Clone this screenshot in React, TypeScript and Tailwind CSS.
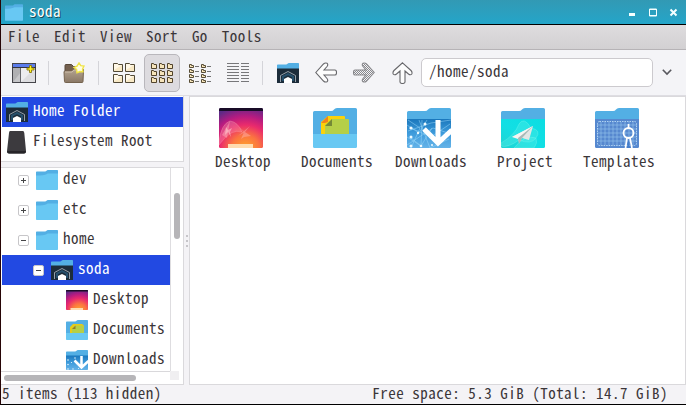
import type { ReactNode } from 'react';

type FolderKind = 'plain' | 'home' | 'desktop' | 'documents' | 'downloads' | 'project' | 'templates';

function Tab() {
  return <path d="M0 12V4.5Q0 3 1.5 3H18Q20 3 21 1.5Q22 0 24 0H42.500Q44 0 44 1.500V12Z" fill="#53afe4" />;
}

function FolderIcon({ kind, w = 22, h = 20 }: { kind: FolderKind; w?: number; h?: number }) {
  const id = `${kind}${w}`;
  const large = w > 30;
  return (
    <svg width={w} height={h} viewBox="0 0 44 40" className="block shrink-0">
      <defs>
        <linearGradient id={`d${id}`} x1="0" y1="0" x2="0" y2="1">
          <stop offset="0" stopColor="#1a77bc" />
          <stop offset=".5" stopColor="#3f9cdc" />
          <stop offset="1" stopColor="#65b3e8" />
        </linearGradient>
        <radialGradient id={`s${id}`} cx=".6" cy="1" r="1.05">
          <stop offset="0" stopColor="#ffa72c" />
          <stop offset=".3" stopColor="#fb7440" />
          <stop offset=".55" stopColor="#ea2b6c" />
          <stop offset=".76" stopColor="#b51b81" />
          <stop offset="1" stopColor="#5b2a86" />
        </radialGradient>
        <linearGradient id={`p${id}`} x1="0" y1="1" x2="1" y2="0">
          <stop offset="0" stopColor="#22d3d2" />
          <stop offset=".45" stopColor="#12dfe4" />
          <stop offset="1" stopColor="#0bdde2" />
        </linearGradient>
      </defs>
      {kind === 'desktop' ? (
        <>
          <rect width="44" height="40" rx="1.500" fill={`url(#s${id})`} />
          <path d="M0 3V1.500Q0 0 1.500 0H42.500Q44 0 44 1.500V3Z" fill="#190c27" />
          <path d="M9 40V36H34V40Z" fill="#ffdcb0" />
          {large && (
            <>
              <path d="M0 34Q2 16 11 13Q19 14 23 24Q12 20 0 37Z" fill="#ffb3c0" fillOpacity=".28" stroke="#ffb0bb" strokeOpacity=".5" strokeWidth=".6" />
              <path d="M3 27L11 13L8 30ZM20 19L26 24L32 28L25 29L22 31L25 24ZM31 18L26 24L19 28Z" fill="#ffc0c4" fillOpacity=".4" />
              <path d="M7 19L9 22L13 20L11 24L12 29L9 24L6 27Z" fill="#ffd2d2" fillOpacity=".55" />
            </>
          )}
        </>
      ) : (
        <Tab />
      )}
      {kind === 'plain' && <path d="M0 11Q16 11 22 8L23 7H44V38.500Q44 40 42.500 40H1.500Q0 40 0 38.500Z" fill="#68c8f3" />}
      {kind === 'home' && (
        <>
          <path d="M0 11H44V40H0Z" fill="#1c2c3a" />
          <path d="M7 38V25L22 17L37 25V38" fill="none" stroke="#b4bec6" strokeWidth="1.600" />
          <path d="M12 36V27L22 22L32 27V36" fill="none" stroke="#26506c" strokeWidth="4" />
          <path d="M14 40V32L22 28L30 32V40Z" fill="#fff" />
        </>
      )}
      {kind === 'documents' && (
        <>
          <path d="M0 9H44V27H0Z" fill="#53afe4" />
          {large ? (
            <>
              <path d="M8 31V14L15 8H31Q32 8 32 9V31Z" fill="#fbd20a" />
              <path d="M8 15L15 8V14L12 15Z" fill="#f1831d" />
              <path d="M12 31V17L19 11H35Q36 11 36 12V31Z" fill="#b5cf48" />
              <path d="M12 18L19 11V18Z" fill="#758936" />
              <path d="M0 26H44V38.500Q44 40 42.500 40H1.500Q0 40 0 38.500Z" fill="#68c8f3" />
            </>
          ) : (
            <>
              <path d="M8 26V14L14 8H32Q36 9 36 13V26Z" fill="#e8cb18" />
              <path d="M12 26V17L18 11H33L36 14V26Z" fill="#b5cf48" />
              <path d="M12 18L19 11V18Z" fill="#937d28" />
              <path d="M0 26H44V38.500Q44 40 42.500 40H1.500Q0 40 0 38.500Z" fill="#68c8f3" />
            </>
          )}
        </>
      )}
      {kind === 'downloads' && (
        <>
          <path d="M0 11H44V38.500Q44 40 42.500 40H1.500Q0 40 0 38.500Z" fill={`url(#d${id})`} />
          {large && (
            <path d="M0 17L12 25L20 12M4 40L13 20L1 12M0 29L14 38L25 20M4 20L24 29L43 16M0 37L26 20L44 26M12 12L23 40L42 31M1 23L24 15L44 12M15 12L14 38L3 29" stroke="#9ddbfb" strokeWidth=".55" opacity=".9" fill="none" />
          )}
          <path d="M31 12V33M17 21L31 35L45 22" stroke="#fff" strokeWidth="5" fill="none" />
          <g fill="#f0fbff">
            <circle cx="4" cy="20" r="1.600" /><circle cx="11" cy="25" r="1.200" /><circle cx="4" cy="29" r="1.500" />
            <circle cx="14" cy="38" r="1.300" /><circle cx="23" cy="29" r="1.200" /><circle cx="18" cy="16" r="1.500" />
            <circle cx="4" cy="38" r="1.500" /><circle cx="25" cy="37" r="1" />
          </g>
        </>
      )}
      {kind === 'project' && (
        <>
          <path d="M0 11H44V38.500Q44 40 42.500 40H1.500Q0 40 0 38.500Z" fill={`url(#p${id})`} />
          <g fill="#67f1e9" fillOpacity=".3" stroke="#9bfff3" strokeOpacity=".5" strokeWidth=".5">
            <path d="M0 35Q14 27 18 16Q23 8 30 20Q41 22 35 30Q30 37 18 32Q7 40 0 38Z" />
            <path d="M13 40Q24 26 35 30Q37 35 33 40Z" />
          </g>
          <path d="M32 18L28 32L21 30L18 35L17 29L11 29Z" fill="#e2e6e5" />
          <path d="M32 18L11 29L17 31Z" fill="#f6f5f3" />
          <path d="M32 18L17 30L18 36L21 30Z" fill="#a9b9b8" />
        </>
      )}
      {kind === 'templates' && (
        <>
          <path d="M0 11H44V38.500Q44 40 42.500 40H1.500Q0 40 0 38.500Z" fill="#5688cf" />
          <path d="M6 14V37M10 14V37M14 14V37M18 14V37M22 14V37M26 14V37M30 14V37M34 14V37M38 14V37M2 17H42M2 21H42M2 25H42M2 29H42M2 33H42" stroke="#98c8ef" strokeWidth=".6" />
          <rect x="2.500" y="13.500" width="39" height="24" rx="2" fill="none" stroke="#c6e4fa" strokeWidth=".8" strokeDasharray="1.500 1" />
          <path d="M33.500 30L32 40H35Z" fill="#447dca" />
          <circle cx="33.500" cy="25" r="5" fill="none" stroke="#fff" strokeWidth="1.900" />
          <path d="M33.500 16V20M32 30L30.500 40M35 30L37 40" stroke="#fff" strokeWidth="1.700" />
        </>
      )}
    </svg>
  );
}

function ToolButton({ active = false, children }: { active?: boolean; children: ReactNode }) {
  return (
    <button
      className={`flex h-[38px] w-9 shrink-0 items-center justify-center rounded-[5px] border ${
        active ? 'border-[#b9b7bc] bg-[#dddbdf]' : 'border-transparent'
      }`}
    >
      {children}
    </button>
  );
}

function Separator() {
  return <div className="ml-1 mr-[5px] h-6 w-px shrink-0 bg-[#d4d4d9]" />;
}

function NewWindowIcon() {
  return (
    <svg width="24" height="20" viewBox="0 0 24 20">
      <rect x=".5" y=".5" width="23" height="19" fill="#dddde0" stroke="#45454b" />
      <path d="M1 5H9V19H1Z" fill="#b0b0b3" />
      <path d="M9 5H23L9 19Z" fill="#ececef" />
      <path d="M1 19L9 9V19Z" fill="#c6c6c9" />
      <rect x="1" y="1" width="22" height="3" fill="#5b7cec" />
      <path d="M0 4.500H24" stroke="#34353d" />
      <path d="M8.500 5V19" stroke="#66666b" />
      <path d="M17.500 2.500H19.500V5H22V7H19.500V9.500H17.500V7H15V5H17.500Z" fill="#fff31d" stroke="#8b790e" strokeWidth=".9" />
    </svg>
  );
}

function NewFolderIcon() {
  return (
    <svg width="22" height="22" viewBox="0 0 22 22">
      <defs>
        <linearGradient id="brownFolder" x1="0" y1="0" x2="0" y2="1">
          <stop offset="0" stopColor="#b5a591" /><stop offset="1" stopColor="#8a7866" />
        </linearGradient>
      </defs>
      <path d="M2 10V3.500Q2 2.500 3 2.500H8.500L10.500 4.500H17V10Z" fill="#74604f" stroke="#574739" />
      <path d="M1 10Q1 9 2 9H8.500L10.500 7H19.500Q20.500 7 20.500 8L20 19.500Q20 20.500 19 20.500H2.500Q1.500 20.500 1.500 19.500Z" fill="url(#brownFolder)" stroke="#75634f" />
      <path d="M2 10H9L11 8H19.500" fill="none" stroke="#cdbdaa" />
      <path d="M16 1L17.800 3.600L21 4L19.500 7L20 9.800L17 9.500L14 10.700L13.600 7.500L11 5.500L14 4.200Z" fill="#fffde4" stroke="#f0e446" strokeWidth="1.400" />
    </svg>
  );
}

function TinyFolders({ size }: { size: 'large' | 'small' }) {
  if (size === 'large')
    return (
      <svg width="22" height="20" viewBox="0 0 22 20" fill="#f8e9c6" stroke="#514937">
        <path d="M.5 .5H4.500L5.500 1.500H9.500V8.500H.5ZM12.500 .5H16.500L17.500 1.500H21.500V8.500H12.500ZM.5 11.500H4.500L5.500 12.500H9.500V19.500H.5ZM12.500 11.500H16.500L17.500 12.500H21.500V19.500H12.500Z" />
        <path d="M1 8V1H4L5 2H9L1 7ZM13 8V1H16L17 2H21L13 7ZM1 19V12H4L5 13H9L1 18ZM13 19V12H16L17 13H21L13 18Z" fill="#fff8e8" stroke="none" />
      </svg>
    );
  return (
    <svg width="22" height="20" viewBox="0 0 22 20" fill="#f6e4ba" stroke="#51432b">
      {[0, 7, 14].map((y) => [0, 8, 16].map((x) => <path key={`${x}-${y}`} transform={`translate(${x} ${y})`} d="M.5 .5H2.500L3 1.500H5.500V5.500H.5Z" />))}
    </svg>
  );
}

function CompactIcon() {
  return (
    <svg width="22" height="20" viewBox="0 0 22 20" fill="#f6e4ba" stroke="#574c35">
      {[1, 6, 11, 16].map((y) => [0, 12].map((x) => (
        <g key={`${x}-${y}`} transform={`translate(${x} ${y})`}>
          <path d="M.5 .5H2.500V1.500H4.500V3.500H.5Z" />
          <path d="M6 2.500H10" stroke="#737373" />
        </g>
      )))}
    </svg>
  );
}

function DetailIcon() {
  return (
    <svg width="22" height="20" viewBox="0 0 22 20">
      <path d="M0 .5H12M14 .5H22M0 3.500H12M14 3.500H22M0 6.500H12M14 6.500H22M0 9.500H12M14 9.500H22M0 12.500H12M14 12.500H22M0 15.500H12M14 15.500H22M0 18.500H12M14 18.500H22" stroke="#77777a" />
    </svg>
  );
}

function Arrow({ direction }: { direction: 'left' | 'right' | 'up' }) {
  const turn = direction === 'left' ? '' : direction === 'right' ? 'rotate(180 11 10.500)' : 'rotate(90 11 11)';
  return (
    <svg width="22" height="22" viewBox="0 0 22 22">
      <defs>
        <pattern id="arrowDither" width="2" height="2" patternUnits="userSpaceOnUse">
          <rect width="2" height="2" fill="#f4f4f7" /><path d="M0 0H1V1H0ZM1 1H2V2H1Z" fill="#88888c" />
        </pattern>
      </defs>
      <path
        transform={turn}
        d="M.8 10.500L8.500 2Q10 .5 12 1.200Q13.500 2.500 12 4.500L9 8H20Q21.500 8 21.500 10.500Q21.500 13 20 13H9L12 16.500Q13.500 18.500 12 19.800Q10 20.500 8.500 19Z"
        fill={direction === 'right' ? 'url(#arrowDither)' : '#fdfdfd'}
        stroke={direction === 'right' ? '#87878b' : '#66666a'}
        strokeWidth="1.100"
      />
    </svg>
  );
}

function Expander({ open }: { open: boolean }) {
  return (
    <span className="flex size-[11px] shrink-0 items-center justify-center rounded-[2px] border border-[#c7c6c9] bg-white">
      <svg width="5" height="5" viewBox="0 0 5 5">
        <path d={open ? 'M0 2.500H5' : 'M0 2.500H5M2.500 0V5'} stroke="#454547" />
      </svg>
    </span>
  );
}

const tree: { name: string; kind: FolderKind; pad: string; open?: boolean; selected?: boolean }[] = [
  { name: 'dev', kind: 'plain', pad: 'pl-4', open: false },
  { name: 'etc', kind: 'plain', pad: 'pl-4', open: false },
  { name: 'home', kind: 'plain', pad: 'pl-4', open: true },
  { name: 'soda', kind: 'home', pad: 'pl-[31px]', open: true, selected: true },
  { name: 'Desktop', kind: 'desktop', pad: 'pl-16' },
  { name: 'Documents', kind: 'documents', pad: 'pl-16' },
  { name: 'Downloads', kind: 'downloads', pad: 'pl-16' },
];

const files: { name: string; kind: FolderKind }[] = [
  { name: 'Desktop', kind: 'desktop' },
  { name: 'Documents', kind: 'documents' },
  { name: 'Downloads', kind: 'downloads' },
  { name: 'Project', kind: 'project' },
  { name: 'Templates', kind: 'templates' },
];

export default function App() {
  return (
    <div className="flex h-[405px] w-[686px] flex-col overflow-hidden border-b border-l border-b-black border-l-[#260506] bg-[#f4f3f6] font-['Noto_Sans_Mono_CJK_SC','DejaVu_Sans_Mono',monospace] text-[15px] leading-[18px] tracking-[0.49px] text-[#3b3639]">
      <header className="flex h-[25px] shrink-0 items-center border-b border-black bg-linear-to-b from-[#3299b4] to-[#23a5c9] pl-1 pr-2 text-white">
        <FolderIcon kind="plain" w={18} h={17} />
        <span className="ml-1.5 pb-[3px] [text-shadow:1px_1px_0_#174955]">soda</span>
        <svg className="ml-auto" width="49" height="9" viewBox="0 0 49 9" fill="none" stroke="#f5ffff">
          <path d="M0 6.500H6" strokeWidth="3" />
          <path d="M20.500 8V1H27.500V8ZM20 1.500H28M20 7.500H28" />
          <path d="M41.500 1.500L47.500 7.500M47.500 1.500L41.500 7.500" strokeWidth="2" />
        </svg>
      </header>

      <nav className="flex h-[25px] shrink-0 items-center gap-[14px] border-b border-[#b6b3b6] bg-linear-to-b from-[#dedcde] to-[#d2d0d2] pb-[3px] pl-[7px]">
        {['File', 'Edit', 'View', 'Sort', 'Go', 'Tools'].map((item) => <span key={item}>{item}</span>)}
      </nav>

      <div className="flex h-[46px] shrink-0 items-center gap-0.5 border-b border-[#dedde2] bg-[#f4f4f7] pl-[5px]">
        <ToolButton><NewWindowIcon /></ToolButton>
        <Separator />
        <ToolButton><NewFolderIcon /></ToolButton>
        <Separator />
        <ToolButton><TinyFolders size="large" /></ToolButton>
        <ToolButton active><TinyFolders size="small" /></ToolButton>
        <ToolButton><CompactIcon /></ToolButton>
        <ToolButton><DetailIcon /></ToolButton>
        <Separator />
        <ToolButton><FolderIcon kind="home" /></ToolButton>
        <ToolButton><Arrow direction="left" /></ToolButton>
        <ToolButton><Arrow direction="right" /></ToolButton>
        <ToolButton><Arrow direction="up" /></ToolButton>
        <div className="-ml-px flex h-[29px] w-[232px] items-center rounded-[5px] border border-[#cccace] bg-white pb-[3px] pl-[7px]">
          /home/soda
        </div>
        <svg className="ml-[7px]" width="10" height="7" viewBox="0 0 10 7" fill="none" stroke="#58585e" strokeWidth="1.600">
          <path d="M.8 .8L5 5L9.200 .8" />
        </svg>
      </div>

      <main className="flex h-[289px] shrink-0">
        <aside className="flex w-[183px] flex-col">
          <section className="h-[66px] shrink-0 border-b border-r border-[#dad9dc] bg-white pl-px pt-px">
            <div className="flex h-[30px] items-center bg-[#2249e2] pl-1 text-white">
              <FolderIcon kind="home" /><span className="ml-[5px] pb-[5px]">Home Folder</span>
            </div>
            <div className="flex h-[30px] items-center pl-[5px]">
              <svg width="20" height="23" viewBox="0 0 20 23">
                <path d="M3 0H16Q17 0 17.300 2L19 20Q19 22.500 17 22.500H2Q0 22.500 0 20L2 2Q2.200 0 3 0Z" fill="#3c3a3e" />
                <path d="M0 20H19Q19 22.500 17 22.500H2Q0 22.500 0 20Z" fill="#262428" />
              </svg>
              <span className="ml-[6px] pb-[5px]">Filesystem Root</span>
            </div>
          </section>

          <section className="mt-[5px] flex h-[218px] shrink-0 flex-col border-y border-r border-[#dad9dc] bg-white">
            <div className="flex h-[203px] shrink-0">
              <div className="w-[169px] shrink-0 overflow-hidden pl-px">
                <div className="-mt-[3px]">
                  {tree.map((row) => (
                    <div key={row.name} className={`flex h-[30px] items-center ${row.pad} ${row.selected ? 'bg-[#2249e2] text-white' : ''}`}>
                      {row.open !== undefined && <span className="mr-[7px]"><Expander open={row.open} /></span>}
                      <FolderIcon kind={row.kind} />
                      <span className="ml-[5px] pb-[5px]">{row.name}</span>
                    </div>
                  ))}
                </div>
              </div>
              <div className="w-[13px] border-l border-[#dedde0] pl-[3px] pt-[25px]">
                <div className="h-[46px] w-1.5 rounded-full bg-[#b6b5b8]" />
              </div>
            </div>
            <div className="flex h-[13px]">
              <div className="w-[169px] border-t border-[#d9d8db] pl-[3px] pt-[3px]">
                <div className="h-1.5 w-[132px] rounded-full bg-[#b6b5b8]" />
              </div>
              <div className="h-[9px] w-[9px] bg-[#f0eff1]" />
            </div>
          </section>
        </aside>

        <div className="flex w-[5px] flex-col items-center justify-center gap-[3px]">
          {[0, 1, 2].map((dot) => <i key={dot} className="size-[2px] shrink-0 bg-[#c6c5c9]" />)}
        </div>

        <section className="w-[497px] border border-[#dad9dc] bg-white pl-1.5 pt-[11px]">
          <div className="flex">
            {files.map((file) => (
              <div key={file.name} className="flex w-[94px] shrink-0 flex-col items-center">
                <div className="mr-1"><FolderIcon kind={file.kind} w={44} h={40} /></div>
                <span className="mt-1">{file.name}</span>
              </div>
            ))}
          </div>
        </section>
      </main>

      <footer className="flex h-[19px] shrink-0 items-center justify-between pb-[3px] pl-px pr-[18px]">
        <span>5 items (113 hidden)</span>
        <span>Free space: 5.3 GiB (Total: 14.7 GiB)</span>
      </footer>
    </div>
  );
}
